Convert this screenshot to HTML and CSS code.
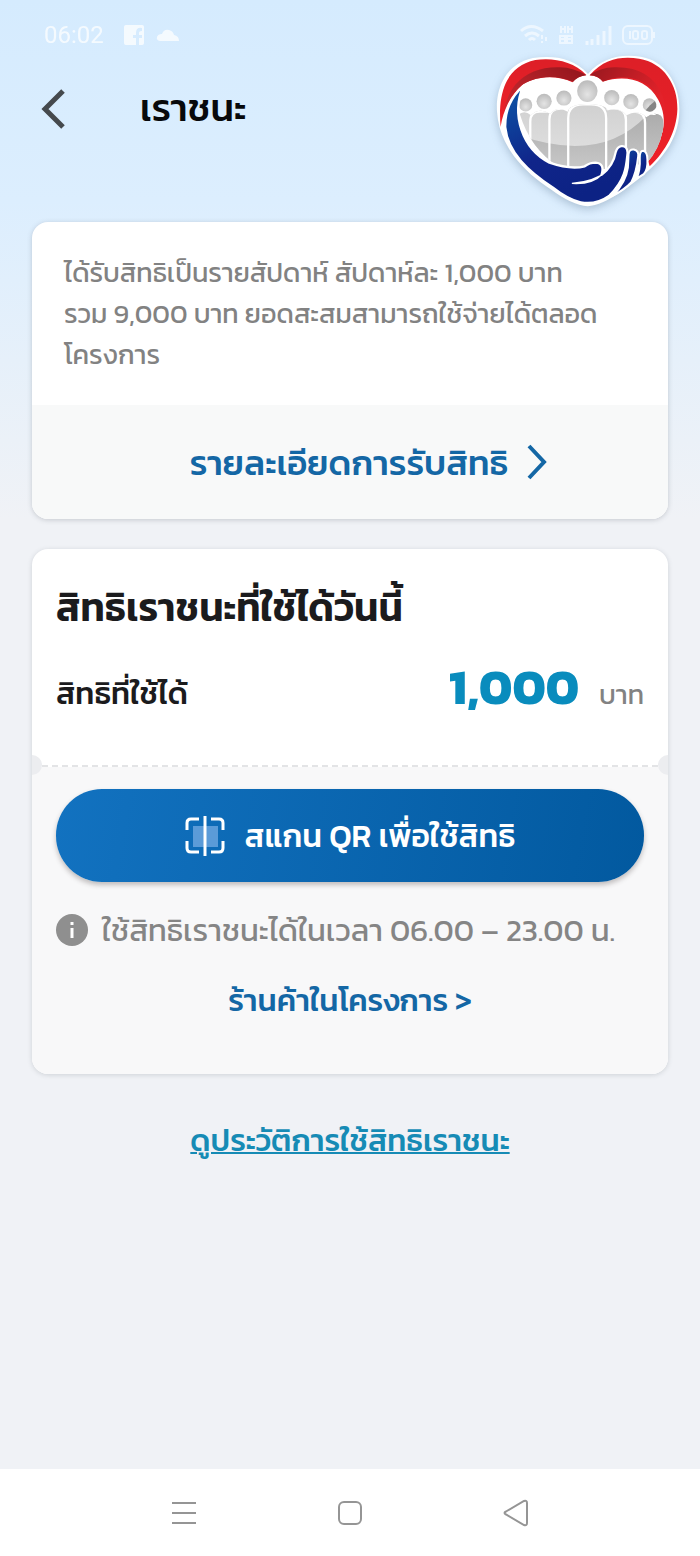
FILE: index.html
```
<!DOCTYPE html>
<html lang="th">
<head>
    <meta charset="UTF-8">
    <meta name="viewport" content="width=device-width, initial-scale=1.0">
    <title>เราชนะ</title>
    <link rel="stylesheet" href="styles.css">
</head>
<body>
    <div class="status-bar">
        <span class="clock">06:02</span>
        <svg class="fb" width="20" height="20" viewBox="0 0 20 20"><path d="M2 0h16a2 2 0 0 1 2 2v16a2 2 0 0 1-2 2h-3v-7h3v-3h-3V8q0-2 3-2V3q-6-1-6 5v2H9v3h3v7H2a2 2 0 0 1-2-2V2a2 2 0 0 1 2-2z" fill="#fff"/></svg>
        <svg width="24" height="14" viewBox="0 0 24 14"><path d="M4 13q-4-1-3-4 1-3 5-3 2-5 7-4 4 1 5 5 5 1 5 6z" fill="#fff"/></svg>
        <div class="status-right">
            <svg width="28" height="22" viewBox="0 0 28 22" fill="none" stroke="#fff" stroke-width="3"><path d="M1 7q10-9 22 0M5 12q7-6 14 0M9 16q3-3 6 0"/><path d="M22 11v8M26 13v6" stroke-width="2" stroke-dasharray="4 2"/></svg>
            <svg width="16" height="20" viewBox="0 0 16 20" fill="none" stroke="#fff" stroke-width="2"><path d="M3 1v7M7 1v7M10 1v7M14 1v7M3 4h4M10 4h4M2 11h5v7H2zM9 11h5v7H9zM2 14h12"/></svg>
            <svg width="28" height="20" viewBox="0 0 28 20" stroke="#fff" stroke-width="3"><path d="M3 20v-4M8 20v-6M14 20V10M20 20V6M26 20V1"/></svg>
            <svg width="34" height="20" viewBox="0 0 34 20" fill="none" stroke="#fff" stroke-width="2"><rect x="1" y="1" width="29" height="18" rx="5"/><path d="M32 7v6M8 6v8"/><rect x="11" y="6" width="5" height="8" rx="2"/><rect x="20" y="6" width="5" height="8" rx="2"/></svg>
        </div>
    </div>

    <header class="header">
        <button type="button" class="back" aria-label="ย้อนกลับ">
            <svg width="26" height="42" viewBox="0 0 26 42"><path d="M23 3L5 21l18 18" fill="none" stroke="#45494d" stroke-width="5"/></svg>
        </button>
        <h1>เราชนะ</h1>
        <svg class="logo" viewBox="40 38 570 472" role="img" aria-label="โลโก้เราชนะ">
            <defs>
                <linearGradient id="red" x1="0" y1="0" x2="0" y2="1">
                    <stop offset="0" stop-color="#dd1f27"/>
                    <stop offset="1" stop-color="#ee2027"/>
                </linearGradient>
                <linearGradient id="redLeft" x1="0" y1="1" x2="1" y2="0.300">
                    <stop offset="0" stop-color="#cf2a30"/>
                    <stop offset="1" stop-color="#98181f"/>
                </linearGradient>
                <linearGradient id="redRight" x1="0" y1="0" x2="1" y2="0.500">
                    <stop offset="0" stop-color="#98181f"/>
                    <stop offset="1" stop-color="#e3222a"/>
                </linearGradient>
                <linearGradient id="blue" x1="0" y1="0" x2="0.5" y2="1">
                    <stop offset="0" stop-color="#0b57a8"/>
                    <stop offset="0.6" stop-color="#10258a"/>
                    <stop offset="1" stop-color="#0c2284"/>
                </linearGradient>
                <linearGradient id="grey" x1="0" y1="0" x2="0" y2="1">
                    <stop offset="0" stop-color="#cdcdcd"/>
                    <stop offset="1" stop-color="#e6e6e6"/>
                </linearGradient>
                <linearGradient id="shade" x1="0" y1="0" x2="0" y2="1">
                    <stop offset="0" stop-color="#a8a8a8"/>
                    <stop offset="1" stop-color="#cbcbcb"/>
                </linearGradient>
                <radialGradient id="head" cx="0.5" cy="0.65" r="0.6">
                    <stop offset="0" stop-color="#e4e4e4"/>
                    <stop offset="1" stop-color="#bdbdbd"/>
                </radialGradient>
                <clipPath id="people">
                    <path d="M118 222q16-12 34 4q26-24 58-4q22-26 54-6q0-22 60-24q58 2 60 20q34-12 58 14q34-18 60 6q24-18 44-4q12 14 6 44q-12 60-48 98L400 390 240 385Q150 330 118 222z"/>
                </clipPath>
            </defs>
            <!-- heart -->
            <path d="M325 101C280 50 215 44 158 53C75 70 45 145 49 215C55 315 125 395 214 452Q275 498 324 502Q365 500 430 455C525 390 602 315 602 210C602 125 555 60 485 49C420 39 365 55 325 101z" fill="#fff"/>
            <path d="M320 104C280 63 220 51 165 59C85 76 50 145 60 262C68 210 90 165 128 132C180 103 235 108 278 126Q292 108 320 104z" fill="url(#red)"/>
            <path d="M280 125Q294 107 320 105Q282 82 240 81Q155 78 105 133Q80 162 68 220Q88 161 128 132Q200 93 280 125z" fill="url(#redLeft)"/>
            <path d="M330 105C375 53 430 47 480 55C555 67 598 135 596 207C594 275 560 335 512 381L504 354C555 305 570 238 538 179C503 116 435 103 370 125Q355 105 330 105z" fill="url(#red)"/>
            <path d="M330 105Q360 82 405 81Q515 78 551 167Q560 196 557 225Q548 165 507 134Q445 94 370 124Q356 106 330 105z" fill="url(#redRight)"/>
            <!-- people -->
            <g clip-path="url(#people)">
                <rect x="110" y="160" width="450" height="250" fill="url(#grey)"/>
                <path d="M110 285Q360 375 500 230L575 200V410H110z" fill="url(#shade)"/>
                <g fill="none" stroke="#fff" stroke-width="7">
                    <path d="M150 390V245q0-30 28-30h35M208 390V238q0-32 35-32h30M265 390V235q0-42 45-42h25q45 0 45 42v155M380 205h25q35 0 35 35v150M440 215h25q33 0 33 35v140M500 222h30"/>
                </g>
            </g>
            <g fill="url(#head)">
                <ellipse cx="323" cy="153" rx="31" ry="33"/>
                <circle cx="252" cy="174" r="23"/>
                <circle cx="397" cy="173" r="23"/>
                <circle cx="192" cy="184" r="23"/>
                <circle cx="455" cy="185" r="23"/>
                <circle cx="136" cy="195" r="20"/>
                <circle cx="511" cy="195" r="20"/>
            </g>
            <path d="M513 196l15-13q12 20-8 31-10 4-20-3z" fill="#858585"/>
            <!-- hand -->
            <path d="M128 138C98 165 73 206 74 262C82 340 145 397 218 445C275 490 330 512 390 470C440 420 441 380 445 340Q444 318 426 320Q414 322 409 338Q402 380 366 407Q377 372 348 370Q330 370 315 381Q272 392 208 370C125 327 92 225 128 138z" fill="url(#blue)" stroke="#fff" stroke-width="7" stroke-linejoin="round"/>
            <path d="M276 435Q340 439 371 405L384 394Q340 427 276 431z" fill="#fff"/>
            <path d="M400 470Q440 430 446 385L448 345Q450 328 464 330Q480 334 477 352Q472 400 456 430Q435 452 400 470z" fill="url(#blue)" stroke="#fff" stroke-width="6"/>
            <path d="M472 418Q484 395 482 355Q482 334 492 334Q505 337 505 360Q507 390 494 405z" fill="url(#blue)" stroke="#fff" stroke-width="6"/>
        </svg>
    </header>

    <main class="content">
        <section class="card">
            <p class="summary">ได้รับสิทธิเป็นรายสัปดาห์ สัปดาห์ละ 1,000 บาท<br>รวม 9,000 บาท ยอดสะสมสามารถใช้จ่ายได้ตลอด<br>โครงการ</p>
            <a href="#" class="detail">
                รายละเอียดการรับสิทธิ
                <svg width="22" height="36" viewBox="0 0 22 36"><path d="M3 2l15 16L3 34" fill="none" stroke="#1467a5" stroke-width="4"/></svg>
            </a>
        </section>

        <section class="card ticket">
            <div class="ticket-top">
                <h2>สิทธิเราชนะที่ใช้ได้วันนี้</h2>
                <div class="balance">
                    <span class="balance-label">สิทธิที่ใช้ได้</span>
                    <strong>1,000</strong>
                    <span class="unit">บาท</span>
                </div>
            </div>
            <div class="ticket-bottom">
                <button type="button" class="scan">
                    <svg width="40" height="40" viewBox="0 0 40 40" fill="none" stroke="#fff" stroke-width="3"><rect x="8" y="10" width="25" height="21" fill="#5b9bd8" stroke="none"/><path d="M2 14V7q0-4 4-4h8M26 3h8q4 0 4 4v7M2 25v7q0 4 4 4h8M26 36h8q4 0 4-4v-7"/><path d="M20 0v40"/></svg>
                    สแกน QR เพื่อใช้สิทธิ
                </button>
                <p class="hours">
                    <svg width="32" height="32" viewBox="0 0 32 32"><circle cx="16" cy="16" r="16" fill="#8f8f8f"/><path d="M16 8v3M16 14v10" stroke="#fff" stroke-width="3"/></svg>
                    ใช้สิทธิเราชนะได้ในเวลา 06.00 – 23.00 น.
                </p>
                <a href="#" class="shops">ร้านค้าในโครงการ &gt;</a>
            </div>
        </section>

        <a href="#" class="history">ดูประวัติการใช้สิทธิเราชนะ</a>
    </main>

    <nav class="nav-bar">
        <button type="button" aria-label="เมนู"><svg width="26" height="26" viewBox="0 0 26 26"><path d="M1 3h24M1 13h24M1 23h24"/></svg></button>
        <button type="button" aria-label="หน้าหลัก"><svg width="26" height="26" viewBox="0 0 26 26"><rect x="2" y="2" width="22" height="22" rx="5"/></svg></button>
        <button type="button" aria-label="กลับ"><svg width="26" height="28" viewBox="0 0 26 28"><path d="M3 12.500L21 2q3-1 3 2v20q0 3-3 2L3 15.500q-3-1.500 0-3z"/></svg></button>
    </nav>
</body>
</html>
```
FILE: styles.css
```
* {
    box-sizing: border-box;
}
body {
    margin: 0;
    min-height: 100vh;
    display: flex;
    flex-direction: column;
    font-family: "Kanit", "Prompt", "Noto Sans Thai", "Noto Sans", sans-serif;
    color: #1b1b1d;
    background: linear-gradient(#d5ebfe 0, #dceefe 200px, #f0f2f6 520px, #f0f2f6 100%);
}
h1, h2, p {
    margin: 0;
}
button {
    border: none;
    background: none;
    padding: 0;
    font-family: inherit;
    cursor: pointer;
}
a {
    color: #1467a5;
    text-decoration: none;
}
svg {
    flex: none;
}
.status-bar {
    display: flex;
    align-items: center;
    height: 52px;
    padding: 18px 44px 0;
    opacity: 0.75;
}
.clock {
    font: 24px/28px Roboto, sans-serif;
    color: #fff;
}
.fb {
    margin: 0 12px 0 20px;
}
.status-right {
    display: flex;
    align-items: center;
    gap: 10px;
    margin-left: auto;
    opacity: 0.75;
}
.header {
    display: flex;
    align-items: flex-start;
    padding: 0 18px 12px 40px;
}
.back {
    display: flex;
    margin: 36px 74px 0 0;
}
h1 {
    margin-top: 32px;
    font-size: 38px;
    line-height: 48px;
    font-weight: 500;
    color: #08090b;
}
.logo {
    width: 188px;
    height: 158px;
    margin-left: auto;
    filter: drop-shadow(0 3px 4px rgba(60, 90, 120, 0.3));
}
.content {
    display: flex;
    flex-direction: column;
    padding: 0 32px;
}
.card {
    background: #fff;
    border-radius: 16px;
    overflow: hidden;
    box-shadow: 0 1px 5px rgba(70, 80, 90, 0.25);
}
.summary {
    padding: 30px 32px;
    font-size: 27px;
    line-height: 41px;
    color: #828282;
}
.detail {
    display: flex;
    align-items: center;
    justify-content: center;
    gap: 18px;
    height: 114px;
    padding-left: 38px;
    background: #f8f9f9;
    font-size: 35px;
    font-weight: 500;
}
.ticket {
    margin-top: 30px;
    box-shadow: 0 1px 5px rgba(70, 80, 90, 0.2);
}
.ticket-top {
    position: relative;
    padding: 30px 24px 36px;
    border-bottom: 2px dashed #e3e4e6;
}
/* notches on both sides of the tear line */
.ticket-top::before, .ticket-top::after {
    content: "";
    position: absolute;
    bottom: -10px;
    width: 20px;
    height: 20px;
    border-radius: 50%;
    background: #ecedf0;
}
.ticket-top::before {
    left: -10px;
}
.ticket-top::after {
    right: -10px;
}
h2 {
    font-size: 39px;
    line-height: 56px;
    font-weight: 600;
}
.balance {
    display: flex;
    align-items: baseline;
    margin-top: 18px;
    line-height: 68px;
}
.balance-label {
    margin-right: auto;
    font-size: 31px;
    font-weight: 500;
}
.balance strong {
    font-size: 50px;
    font-weight: 700;
    color: #098cbd;
}
.unit {
    margin-left: 20px;
    font-size: 27px;
    color: #828282;
}
.ticket-bottom {
    display: flex;
    flex-direction: column;
    padding: 22px 24px 50px;
    background: #f8f8f9;
}
.scan {
    display: flex;
    align-items: center;
    justify-content: center;
    gap: 20px;
    height: 93px;
    border-radius: 46px;
    background: linear-gradient(100deg, #1272c0, #02599f);
    box-shadow: 0 3px 5px rgba(60, 50, 50, 0.3);
    color: #fff;
    font-size: 32px;
    font-weight: 500;
}
.hours {
    display: flex;
    align-items: center;
    gap: 14px;
    margin-top: 24px;
    font-size: 31px;
    line-height: 48px;
    white-space: nowrap;
    color: #858585;
}
.shops {
    align-self: center;
    margin-top: 22px;
    font-size: 31px;
    line-height: 48px;
    font-weight: 500;
}
.history {
    align-self: center;
    margin-top: 42px;
    font-size: 31px;
    line-height: 48px;
    font-weight: 500;
    color: #168bb5;
    text-decoration: underline;
    text-decoration-thickness: 2px;
}
.nav-bar {
    display: flex;
    justify-content: center;
    gap: 140px;
    height: 87px;
    margin-top: auto;
    background: #fff;
}
.nav-bar svg {
    display: block;
    fill: none;
    stroke: #959595;
    stroke-width: 2;
}
```
